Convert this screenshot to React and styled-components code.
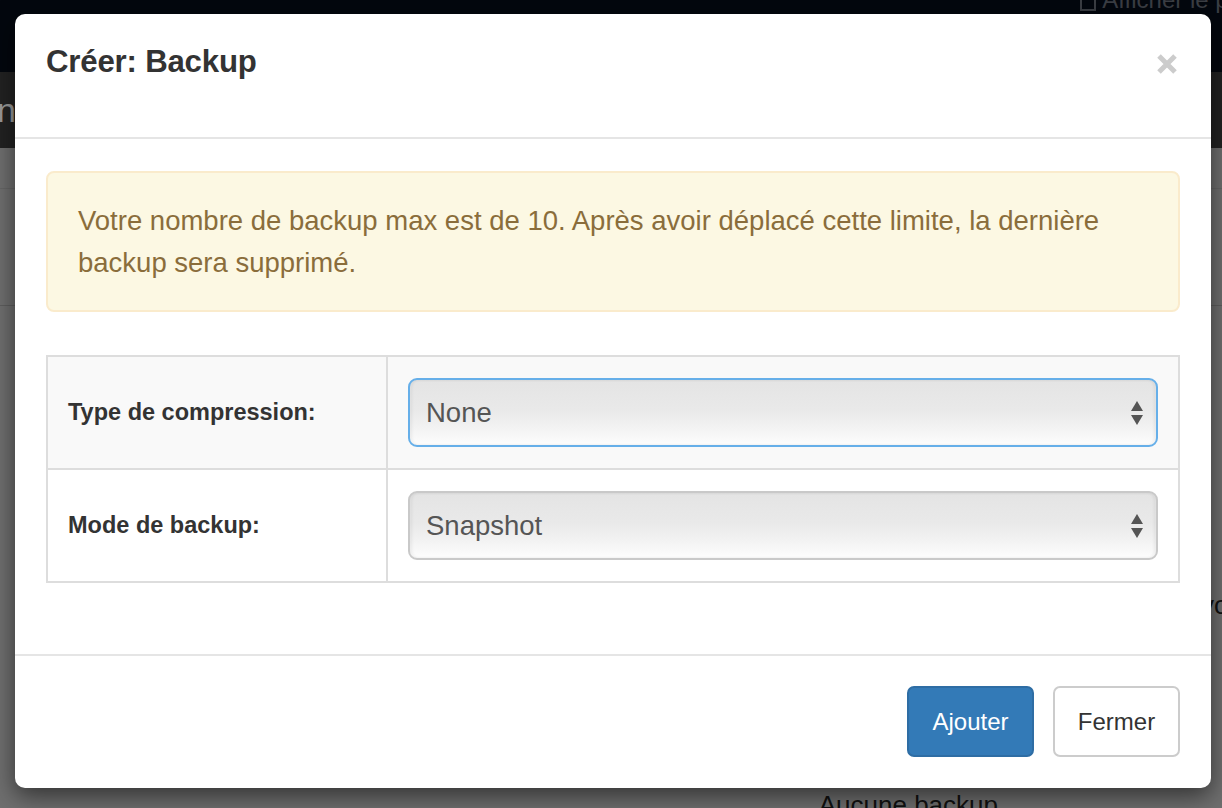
import React from "react";
import styled, { createGlobalStyle } from "styled-components";

const Global = createGlobalStyle`
  html, body { margin: 0; padding: 0; }
  body {
    width: 1222px;
    height: 808px;
    overflow: hidden;
    font-family: "Liberation Sans", Arial, sans-serif;
    background: #6f6f6f;
  }
`;

const Page = styled.div`
  position: relative;
  width: 1222px;
  height: 808px;
  display: flex;
  flex-direction: column;
  background: #6f6f6f;
  overflow: hidden;
`;

const Navbar = styled.div`
  height: 72px;
  flex-shrink: 0;
  background: #03070e;
  display: flex;
  justify-content: flex-end;
  align-items: flex-start;
`;

const NavLink = styled.div`
  margin-top: -14px;
  margin-right: -60px;
  color: #3b3e44;
  font-size: 24px;
  display: flex;
  align-items: center;
  gap: 6px;
  white-space: nowrap;
`;

const SubBar = styled.div`
  height: 76px;
  flex-shrink: 0;
  background: #222222;
  display: flex;
  align-items: center;
`;

const Brand = styled.div`
  width: 16px;
  display: flex;
  justify-content: flex-end;
  color: #9a9a9a;
  font-size: 34px;
  white-space: nowrap;
`;

const Content = styled.div`
  flex: 1;
  display: flex;
  flex-direction: column;
  align-items: flex-end;
`;

const RuleLine = styled.div`
  width: 100%;
  height: 1px;
  background: ${(p) => p.$c || "#606060"};
  margin-top: ${(p) => p.$mt || 0}px;
`;

const SideText = styled.div`
  margin-top: ${(p) => p.$mt}px;
  margin-right: ${(p) => p.$mr}px;
  color: #111;
  font-size: 26px;
  line-height: 30px;
  white-space: nowrap;
`;

const Modal = styled.div`
  position: absolute;
  top: 14px;
  left: 15px;
  width: 1196px;
  height: 774px;
  background: #fff;
  border-radius: 10px;
  box-shadow: 0 8px 24px rgba(0, 0, 0, 0.55);
  display: flex;
  flex-direction: column;
  overflow: hidden;
`;

const Header = styled.div`
  display: flex;
  justify-content: space-between;
  align-items: flex-start;
  padding: 31px 31px 58px 31px;
  border-bottom: 2px solid #e5e5e5;
`;

const Title = styled.h4`
  margin: 0;
  font-size: 31.2px;
  line-height: 34px;
  font-weight: 700;
  color: #333;
  letter-spacing: -0.2px;
`;

const Close = styled.button`
  box-sizing: border-box;
  border: 0;
  background: transparent;
  padding: 8px 0 0 0;
  margin: 0 1px 0 0;
  width: 24px;
  height: 34px;
  display: flex;
  align-items: flex-start;
  justify-content: center;
  cursor: pointer;
`;

const Body = styled.div`
  flex: 1;
  padding: 32px 31px 31px 31px;
`;

const Alert = styled.div`
  background: #fcf8e3;
  border: 2px solid #faebcc;
  border-radius: 8px;
  color: #8a6d3b;
  font-size: 27.5px;
  line-height: 42px;
  padding: 27px 30px 26px 30px;
  margin-bottom: 43px;
`;

const Table = styled.table`
  width: 100%;
  table-layout: fixed;
  border-collapse: collapse;
  border: 2px solid #dddddd;
`;

const LabelCol = styled.col`
  width: 340px;
`;

const Row = styled.tr`
  background: ${(p) => (p.$striped ? "#f9f9f9" : "#fff")};
`;

const LabelCell = styled.td`
  padding: 0 20px;
  border: 2px solid #dddddd;
  font-weight: 700;
  font-size: 23.5px;
  color: #333;
  height: 111px;
  vertical-align: middle;
`;

const FieldCell = styled.td`
  padding: 21px 20px;
  border: 2px solid #dddddd;
  vertical-align: middle;
`;

const SelectWrap = styled.div`
  position: relative;
`;

const Select = styled.select`
  appearance: none;
  -webkit-appearance: none;
  width: 100%;
  height: 69px;
  border-radius: 9px;
  border: 2px solid ${(p) => (p.$focus ? "#66afe9" : "#c9c9c9")};
  background: linear-gradient(
    to bottom,
    #e4e4e4 0%,
    #e9e9e9 45%,
    #f3f3f3 75%,
    #fdfdfd 100%
  );
  box-shadow: inset 2px 0 3px rgba(0, 0, 0, 0.06),
    inset -2px 0 3px rgba(0, 0, 0, 0.06),
    inset 0 -2px 2px rgba(255, 255, 255, 0.8);
  color: #555;
  font-family: "Liberation Sans", Arial, sans-serif;
  font-size: 27.5px;
  padding: 0 40px 0 16px;
  outline: none;
`;

const Arrows = styled.svg`
  position: absolute;
  right: 14px;
  top: 50%;
  transform: translateY(-50%);
  pointer-events: none;
`;

const Footer = styled.div`
  display: flex;
  justify-content: flex-end;
  gap: 19px;
  padding: 30px 31px 31px 31px;
  border-top: 2px solid #e5e5e5;
`;

const Button = styled.button`
  height: 71px;
  width: 127px;
  padding: 0;
  border-radius: 7px;
  font-family: "Liberation Sans", Arial, sans-serif;
  font-size: 24px;
  border: 2px solid ${(p) => (p.$primary ? "#2e6da4" : "#cccccc")};
  background: ${(p) => (p.$primary ? "#337ab7" : "#ffffff")};
  color: ${(p) => (p.$primary ? "#ffffff" : "#333333")};
  cursor: pointer;
`;

function SelectField({ value, focus }) {
  return (
    <SelectWrap>
      <Select $focus={focus} defaultValue={value}>
        <option>{value}</option>
      </Select>
      <Arrows width="14" height="26" viewBox="0 0 14 26">
        <path d="M7 1 L13 11 L1 11 Z" fill="#555" />
        <path d="M1 15 L13 15 L7 25 Z" fill="#555" />
      </Arrows>
    </SelectWrap>
  );
}

export default function App() {
  return (
    <>
      <Global />
      <Page>
        <Navbar>
          <NavLink>
            <svg width="16" height="22" viewBox="0 0 16 22">
              <rect x="1" y="1" width="14" height="20" fill="none" stroke="#3b3e44" strokeWidth="2" />
            </svg>
            Afficher le panier
          </NavLink>
        </Navbar>
        <SubBar>
          <Brand>Admin</Brand>
        </SubBar>
        <Content>
          <RuleLine $mt={40} $c="#666" />
          <RuleLine $mt={116} $c="#5e5e5e" />
          <SideText $mt={284} $mr={-34}>vous</SideText>
          <SideText $mt={170} $mr={224}>Aucune backup</SideText>
        </Content>

        <Modal>
          <Header>
            <Title>Créer: Backup</Title>
            <Close aria-label="Fermer">
              <svg width="22" height="22" viewBox="0 0 22 22">
                <path d="M3 3 L19 19 M19 3 L3 19" stroke="#cccccc" strokeWidth="5" strokeLinecap="butt" />
              </svg>
            </Close>
          </Header>
          <Body>
            <Alert>
              Votre nombre de backup max est de 10. Après avoir déplacé cette limite, la dernière backup sera supprimé.
            </Alert>
            <Table>
              <colgroup>
                <LabelCol />
                <col />
              </colgroup>
              <tbody>
                <Row $striped>
                  <LabelCell>Type de compression:</LabelCell>
                  <FieldCell>
                    <SelectField value="None" focus />
                  </FieldCell>
                </Row>
                <Row>
                  <LabelCell>Mode de backup:</LabelCell>
                  <FieldCell>
                    <SelectField value="Snapshot" />
                  </FieldCell>
                </Row>
              </tbody>
            </Table>
          </Body>
          <Footer>
            <Button $primary>Ajouter</Button>
            <Button>Fermer</Button>
          </Footer>
        </Modal>
      </Page>
    </>
  );
}
